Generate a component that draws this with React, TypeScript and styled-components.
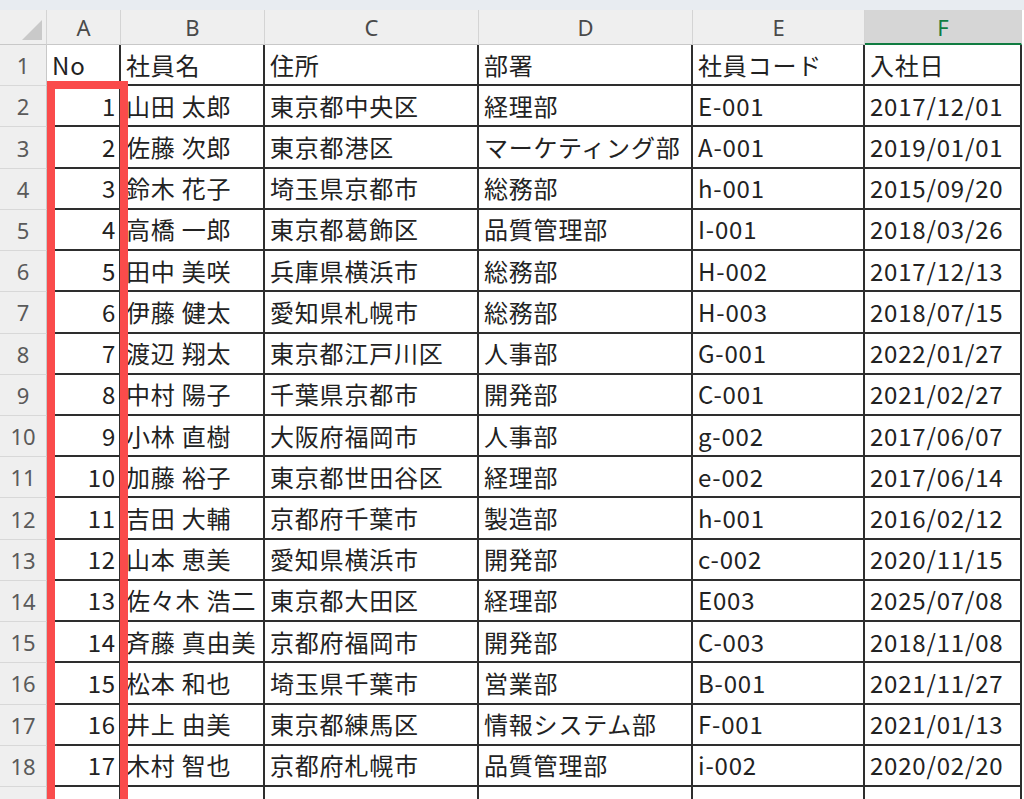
import React from "react";
import styled, { createGlobalStyle, css } from "styled-components";

const Global = createGlobalStyle`
  html, body { margin: 0; padding: 0; background: #ffffff; }
  body { overflow: hidden; font-family: "Noto Sans CJK JP", "Noto Sans", sans-serif; }
`;

const Page = styled.div`
  width: 1024px;
  height: 799px;
  overflow: hidden;
  background: #ffffff;
  display: flex;
  flex-direction: column;
`;

const TopStrip = styled.div`
  height: 10px;
  flex: 0 0 10px;
  background: #e8ecf1;
`;

const Sheet = styled.div`
  position: relative;
  display: grid;
  grid-template-columns: 47px 74px 144px 214px 214px 172px 157px;
  grid-template-rows: 35px repeat(19, 41.22px);
`;

const Corner = styled.div`
  background: #efefef;
  border-right: 1px solid #d4d4d4;
  border-bottom: 1px solid #c8c8c8;
  box-sizing: border-box;
  display: flex;
  align-items: flex-end;
  justify-content: flex-end;
  padding: 0 4px 4px 0;
`;

const ColHeader = styled.div<{ $selected?: boolean }>`
  box-sizing: border-box;
  display: flex;
  align-items: center;
  justify-content: center;
  font-family: "Noto Sans", "Liberation Sans", sans-serif;
  font-size: 22px;
  color: #4a4a4a;
  background: #efefef;
  border-right: 1px solid #d4d4d4;
  border-bottom: 1px solid #c8c8c8;
  ${(p) =>
    p.$selected &&
    css`
      background: #d6d6d6;
      color: #107c41;
      border-bottom: 2px solid #107c41;
    `}
`;

const RowHeader = styled.div`
  box-sizing: border-box;
  display: flex;
  align-items: center;
  justify-content: center;
  font-family: "Noto Sans", "Liberation Sans", sans-serif;
  font-size: 22px;
  color: #5a5a5a;
  background: #efefef;
  border-right: 1px solid #c8c8c8;
  border-bottom: 1px solid #d8d8d8;
`;

const Cell = styled.div<{ $align?: "left" | "right" }>`
  box-sizing: border-box;
  display: flex;
  align-items: center;
  justify-content: ${(p) => (p.$align === "right" ? "flex-end" : "flex-start")};
  padding: ${(p) => (p.$align === "right" ? "0 3px 1px 0" : "0 0 1px 5px")};
  font-family: "Noto Sans CJK JP", "Noto Sans", sans-serif;
  font-size: 24px;
  letter-spacing: 0.8px;
  color: #222;
  white-space: nowrap;
  overflow: hidden;
  border-right: 2px solid #2e2e2e;
  border-bottom: 2px solid #2e2e2e;
  background: #ffffff;
`;

const Highlight = styled.div`
  position: absolute;
  left: 47px;
  top: 71px;
  width: 81px;
  height: 760px;
  box-sizing: border-box;
  border: 8px solid #fa4b4b;
  pointer-events: none;
`;

const rows: string[][] = [
  ["No", "社員名", "住所", "部署", "社員コード", "入社日"],
  ["1", "山田 太郎", "東京都中央区", "経理部", "E-001", "2017/12/01"],
  ["2", "佐藤 次郎", "東京都港区", "マーケティング部", "A-001", "2019/01/01"],
  ["3", "鈴木 花子", "埼玉県京都市", "総務部", "h-001", "2015/09/20"],
  ["4", "高橋 一郎", "東京都葛飾区", "品質管理部", "I-001", "2018/03/26"],
  ["5", "田中 美咲", "兵庫県横浜市", "総務部", "H-002", "2017/12/13"],
  ["6", "伊藤 健太", "愛知県札幌市", "総務部", "H-003", "2018/07/15"],
  ["7", "渡辺 翔太", "東京都江戸川区", "人事部", "G-001", "2022/01/27"],
  ["8", "中村 陽子", "千葉県京都市", "開発部", "C-001", "2021/02/27"],
  ["9", "小林 直樹", "大阪府福岡市", "人事部", "g-002", "2017/06/07"],
  ["10", "加藤 裕子", "東京都世田谷区", "経理部", "e-002", "2017/06/14"],
  ["11", "吉田 大輔", "京都府千葉市", "製造部", "h-001", "2016/02/12"],
  ["12", "山本 恵美", "愛知県横浜市", "開発部", "c-002", "2020/11/15"],
  ["13", "佐々木 浩二", "東京都大田区", "経理部", "E003", "2025/07/08"],
  ["14", "斉藤 真由美", "京都府福岡市", "開発部", "C-003", "2018/11/08"],
  ["15", "松本 和也", "埼玉県千葉市", "営業部", "B-001", "2021/11/27"],
  ["16", "井上 由美", "東京都練馬区", "情報システム部", "F-001", "2021/01/13"],
  ["17", "木村 智也", "京都府札幌市", "品質管理部", "i-002", "2020/02/20"],
  ["", "", "", "", "", ""],
];

const cols = ["A", "B", "C", "D", "E", "F"];

export default function App() {
  return (
    <Page>
      <Global />
      <TopStrip />
      <Sheet>
        <Corner>
          <svg width="20" height="20" viewBox="0 0 20 20">
            <polygon points="20,0 20,20 0,20" fill="#c9c9c9" />
          </svg>
        </Corner>
        {cols.map((c) => (
          <ColHeader key={c} $selected={c === "F"}>
            {c}
          </ColHeader>
        ))}
        {rows.map((r, i) => (
          <React.Fragment key={i}>
            <RowHeader>{i < 18 ? i + 1 : ""}</RowHeader>
            {r.map((v, j) => (
              <Cell key={j} $align={j === 0 && i > 0 ? "right" : "left"}>
                {v}
              </Cell>
            ))}
          </React.Fragment>
        ))}
        <Highlight />
      </Sheet>
    </Page>
  );
}
